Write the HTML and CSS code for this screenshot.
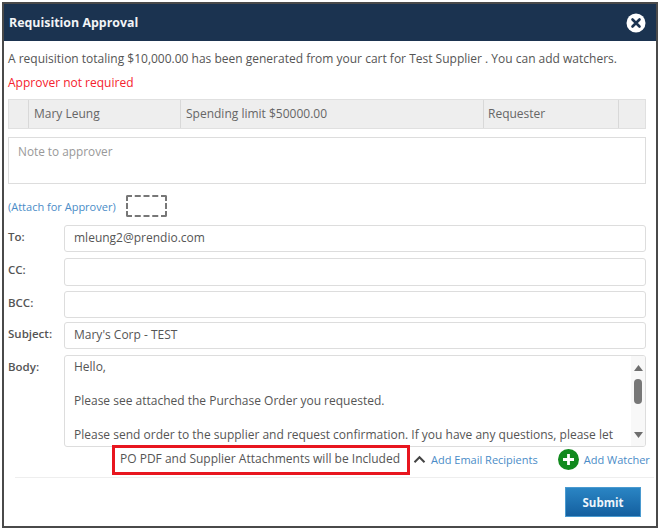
FILE: index.html
```html
<!DOCTYPE html>
<html lang="en">
<head>
<meta charset="utf-8">
<title>Requisition Approval</title>
<link rel="stylesheet" href="styles.css">
</head>
<body>
<div class="dialog">
  <header class="head">
    <h1 class="title">Requisition Approval</h1>
    <svg class="close" width="20" height="20" viewBox="0 0 20 20"><circle cx="10" cy="10" r="9.5" fill="#fff"/><path d="M6.5 6.5l7 7M13.5 6.5l-7 7" stroke="#1b3350" stroke-width="2.6" stroke-linecap="round"/></svg>
  </header>
  <main class="content">
    <p class="intro">A requisition totaling $10,000.00 has been generated from your cart for Test Supplier . You can add watchers.</p>
    <p class="warn">Approver not required</p>
    <div class="approver">
      <div class="cell c-a"></div>
      <div class="cell c-name">Mary Leung</div>
      <div class="cell c-limit">Spending limit $50000.00</div>
      <div class="cell c-role">Requester</div>
      <div class="cell c-end"></div>
    </div>
    <div class="note">Note to approver</div>
    <div class="attach"><a class="link">(Attach for Approver)</a><span class="drop"></span></div>
    <div class="field f-to"><label class="lbl">To:</label><div class="input">mleung2@prendio.com</div></div>
    <div class="field f-cc"><label class="lbl">CC:</label><div class="input"></div></div>
    <div class="field f-bcc"><label class="lbl">BCC:</label><div class="input"></div></div>
    <div class="field f-subj"><label class="lbl">Subject:</label><div class="input">Mary's Corp - TEST</div></div>
    <div class="field f-body"><label class="lbl">Body:</label>
      <div class="bodybox">
        <div class="bodytext">Hello,<br><br>Please see attached the Purchase Order you requested.<br><br>Please send order to the supplier and request confirmation. If you have any questions, please let</div>
        <div class="scroll">
          <svg width="9" height="6" viewBox="0 0 9 6"><path d="M4.5 0L9 6H0z" fill="#6e6e6e"/></svg>
          <span class="thumb"></span>
          <svg class="down" width="9" height="6" viewBox="0 0 9 6"><path d="M0 0h9L4.500 6z" fill="#6e6e6e"/></svg>
        </div>
      </div>
    </div>
    <div class="actions">
      <div class="included">PO PDF and Supplier Attachments will be Included</div>
      <svg class="chev" width="13" height="9" viewBox="0 0 13 9"><path d="M1.500 7.200L6.500 2.200l5 5" fill="none" stroke="#444" stroke-width="2"/></svg>
      <a class="link recip">Add Email Recipients</a>
      <svg class="plus" width="21" height="21" viewBox="0 0 21 21"><circle cx="10.500" cy="10.500" r="10.500" fill="#118a1e"/><path d="M10.500 5v11M5 10.500h11" stroke="#fff" stroke-width="2.800"/></svg>
      <a class="link watcher">Add Watcher</a>
    </div>
    <div class="foot"><button class="submit">Submit</button></div>
  </main>
</div>
</body>
</html>
```
FILE: styles.css
```css
* { box-sizing: border-box; }
html, body { margin: 0; padding: 0; background: #fff; }
body { width: 660px; height: 532px; padding: 2px 2px 0 2px; font-family: "Open Sans", sans-serif; font-size: 12px; color: #555; overflow: hidden; }
.dialog { width: 656px; height: 526px; border: 2px solid #4a4a4a; background: #fff; display: flex; flex-direction: column; }
.head { height: 37px; flex: none; background: #1b3350; display: flex; align-items: center; justify-content: space-between; padding: 0 10px 0 5px; }
.title { margin: 0; font-size: 12.400px; font-weight: 700; color: #f2f4f6; }
.content { padding: 0 10px 0 4px; flex: 1; min-width: 0; }
.intro { margin: 9px 0 0; height: 17px; line-height: 17px; font-size: 12px; color: #555; white-space: nowrap; }
.warn { margin: 7px 0 0; height: 17px; line-height: 17px; color: #f5222d; }
.approver { margin-top: 8px; height: 30px; display: flex; background: #eee; border: 1px solid #e0e0e0; }
.cell { border-right: 1px solid #d8d8d8; padding-left: 4px; line-height: 28px; color: #666; }
.c-a { width: 20px; }
.c-name { width: 152px; padding-left: 5px; }
.c-limit { width: 303px; padding-left: 5px; }
.c-role { width: 135px; }
.c-end { flex: 1; border-right: 0; }
.note { margin-top: 8px; height: 47px; border: 1px solid #ddd; padding: 5px 9px; color: #999; font-size: 11.800px; line-height: 17px; }
.attach { height: 30px; margin-top: 11px; display: flex; align-items: flex-start; gap: 10px; }
.link { color: #4a8cc7; font-size: 11px; }
.attach .link { line-height: 24px; }
.drop { width: 41px; height: 22px; border: 2px dashed #777; border-radius: 2px; }
.field { display: flex; }
.lbl { width: 56px; flex: none; font-weight: 600; color: #555; font-size: 11.500px; line-height: 24px; }
.input { flex: 1; height: 27px; border: 1px solid #ddd; border-radius: 3px; padding: 0 9px; line-height: 23px; color: #555; }
.f-cc { margin-top: 6px; }
.f-cc .input { height: 28px; }
.f-bcc { margin-top: 5px; }
.f-subj { margin-top: 4px; }
.f-body { margin-top: 6px; }
.bodybox { flex: 1; height: 92px; border: 1px solid #ddd; border-radius: 3px; display: flex; overflow: hidden; }
.bodytext { flex: 1; padding: 2px 9px 0; line-height: 17px; color: #555; font-size: 12px; white-space: nowrap; overflow: hidden; }
.scroll { width: 14px; flex: none; background: #f8f8f8; display: flex; flex-direction: column; align-items: center; padding: 9px 0 8px; }
.thumb { width: 8px; height: 25px; margin-top: 8px; background: #777; border-radius: 4px; }
.down { margin-top: auto; }
.actions { display: flex; align-items: center; height: 30px; margin-top: -2px; padding: 0 0 2px 104px; white-space: nowrap; }
.included { flex: none; width: 298px; height: 30px; margin-bottom: -2px; border: 3px solid #e8161f; padding-left: 5px; line-height: 22px; color: #555; font-size: 12px; background: #fff; }
.chev { flex: none; margin-left: 3px; }
.recip { flex: none; margin-left: 5px; }
.plus { flex: none; margin-left: 20px; }
.watcher { flex: none; margin-left: 5px; }
.foot { margin: 2px -8px 0 7px; padding: 9px 13px 0 0; border-top: 1px solid #eee; display: flex; justify-content: flex-end; }
.submit { width: 76px; height: 30px; border: 1px solid #4a9ad0; background: linear-gradient(#2a85c4, #145f9f); color: #eef5fb; font: 700 11.500px "Open Sans", sans-serif; padding: 0; }
```
